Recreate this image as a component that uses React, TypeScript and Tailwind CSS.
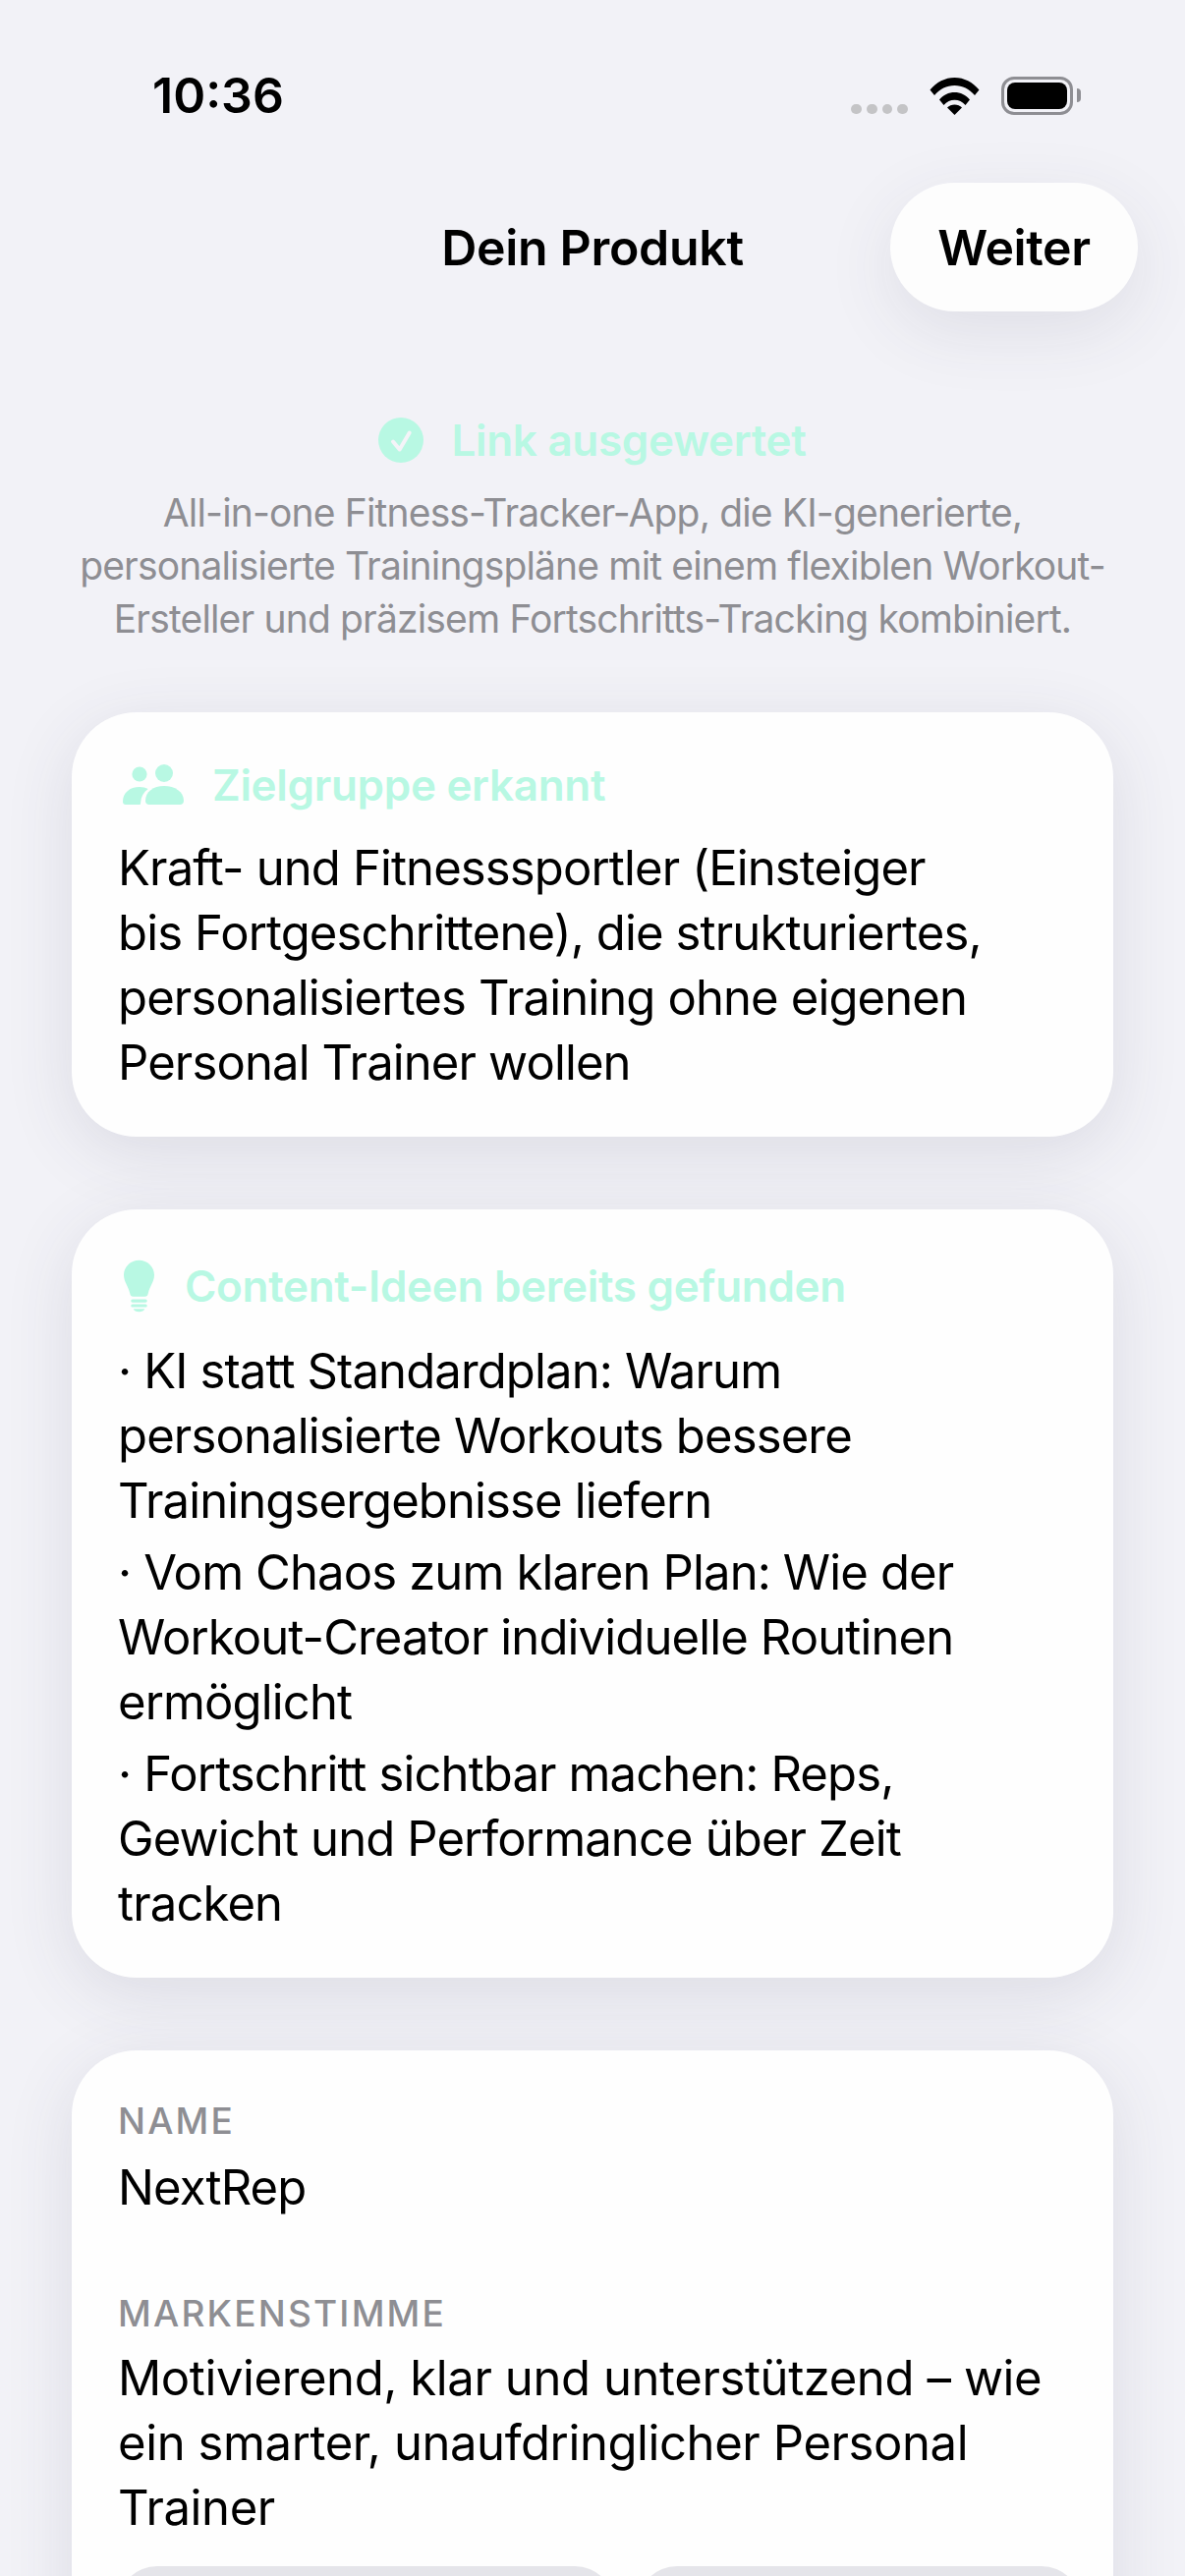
import React from 'react';

const font = "font-['Inter','Noto_Sans',sans-serif]";

function CheckIcon() {
  return (
    <svg viewBox="0 0 46 46" className="w-[46px] h-[46px] shrink-0">
      <circle cx="23" cy="23" r="23" fill="#b8f8e3" />
      <path d="M15 24.500l6.700 8L31.700 15.500" fill="none" stroke="#f4f4f8" strokeWidth="4" strokeLinecap="round" strokeLinejoin="round" />
    </svg>
  );
}

function PeopleIcon() {
  return (
    <svg viewBox="0 0 62 42" className="ml-[5px] w-[62px] h-[42px] shrink-0" fill="#b8f8e3">
      <circle cx="17" cy="10" r="7.6" />
      <circle cx="42" cy="9" r="9" />
      <path d="M0 38c0-9 7-15 17-15 3.500 0 6.400.8 8.700 2-4.600 3.500-7.200 8-7.500 13.500 0 1-.2 2-.7 2.500H3c-2 0-3-1.200-3-3z" />
      <path d="M23 37c0-9 8-15 19-15s20 6 20 15c0 2.500-1.500 4-4 4H27c-2.500 0-4-1.500-4-4z" />
    </svg>
  );
}

function BulbIcon() {
  return (
    <svg viewBox="0 0 32 54" className="ml-[6px] w-[31px] h-[54px] shrink-0" fill="#b8f8e3">
      <path d="M16 0C7 0 0 7 0 15.500c0 7.500 4.500 11 6.500 19.500.5 2 1.300 3 3.300 3h12.400c2 0 2.800-1 3.300-3C27.500 26.500 32 23 32 15.500 32 7 25 0 16 0z" />
      <rect x="7.500" y="41" width="17" height="3.200" rx="1.600" />
      <rect x="7.500" y="46" width="17" height="3.200" rx="1.600" />
      <path d="M10 51h12c-.8 2-3 3-6 3s-5.200-1-6-3z" />
    </svg>
  );
}

function WifiIcon() {
  return (
    <svg viewBox="0 0 50 38" className="w-[51px] h-[38px]" fill="#000">
      <path d="M0 12.500C6.500 4.700 15.300 0 25 0s18.500 4.700 25 12.500l-4.500 5.500C40 11.500 33 8 25 8S10 11.500 4.500 18z" />
      <path d="M9.500 22.500C13.500 17.500 19 15 25 15s11.500 2.500 15.500 7.500L36 28c-3-3.500-6.800-5.300-11-5.300S17 24.500 14 28z" />
      <path d="M17.500 30.500C19.500 28.500 22 27.500 25 27.500s5.500 1 7.500 3L25 38z" />
    </svg>
  );
}

function Battery() {
  return (
    <div className="flex items-center gap-[4px]">
      <div className="w-[73px] h-[39px] rounded-[13px] border-[3px] border-[#8e8e93] p-[3px]">
        <div className="w-full h-full rounded-[8px] bg-black" />
      </div>
      <div className="w-[4px] h-[14px] rounded-r-[4px] bg-[#8e8e93]" />
    </div>
  );
}

function Card({ children }: { children: React.ReactNode }) {
  return (
    <div className="bg-[#fefefe] rounded-[66px] px-[47px] pt-[47px] pb-[42px] shadow-[0_16px_70px_rgba(60,60,90,0.12)]">
      {children}
    </div>
  );
}

const ideas = [
  'KI statt Standardplan: Warum personalisierte Workouts bessere Trainingsergebnisse liefern',
  'Vom Chaos zum klaren Plan: Wie der Workout-Creator individuelle Routinen ermöglicht',
  'Fortschritt sichtbar machen: Reps, Gewicht und Performance über Zeit tracken',
];

const body = 'text-[49px] leading-[66px] tracking-[-0.87px]';
const heading = 'text-[44px] font-semibold tracking-[-0.3px] text-[#b8f8e3]';
const label = 'text-[37px] leading-[50px] font-medium tracking-[2.2px] text-[#8e8e93]';

export default function App() {
  return (
    <div className={`h-[2622px] overflow-hidden bg-[#f2f2f7] text-black ${font}`}>
      {/* Statusleiste */}
      <div className="h-[186px] pl-[155px] pr-[106px] pt-[8px] flex items-center justify-between">
        <span className="text-[50px] font-semibold leading-none">10:36</span>
        <div className="flex items-end gap-[22px]">
          <div className="flex gap-[5px] pb-[1px]">
            <div className="w-[10.7px] h-[10px] rounded-full bg-[#c4c4c6]" />
            <div className="w-[10.7px] h-[10px] rounded-full bg-[#c4c4c6]" />
            <div className="w-[10.7px] h-[10px] rounded-full bg-[#c4c4c6]" />
            <div className="w-[10.7px] h-[10px] rounded-full bg-[#c4c4c6]" />
          </div>
          <WifiIcon />
          <Battery />
        </div>
      </div>

      {/* Navigation */}
      <div className="grid grid-cols-[1fr_auto_1fr] items-center px-[48px]">
        <div />
        <h1 className="text-[50px] font-semibold leading-none tracking-[-0.3px]">Dein Produkt</h1>
        <button className="justify-self-end w-[252px] h-[131px] rounded-full bg-[#fdfdfd] text-[50px] font-semibold leading-none tracking-[-0.4px] shadow-[0_20px_70px_rgba(60,60,90,0.1)]">
          Weiter
        </button>
      </div>

      {/* Auswertung */}
      <div className="mt-[104px] px-[73px]">
        <div className="flex items-center justify-center gap-[28px] h-[54px]">
          <CheckIcon />
          <span className={heading}>Link ausgewertet</span>
        </div>
        <p className="mt-[20px] text-center text-[39px] leading-[54px] tracking-[-0.84px] text-[#8e8e93]">
          All-in-one Fitness-Tracker-App, die KI-generierte, personalisierte Trainingspläne mit einem flexiblen Workout-Ersteller und präzisem Fortschritts-Tracking kombiniert.
        </p>
      </div>

      <div className="mt-[68px] px-[73px] flex flex-col gap-[74px]">
        <Card>
          <div className="flex items-center gap-[29px] h-[54px] mb-[25px]">
            <PeopleIcon />
            <span className={heading}>Zielgruppe erkannt</span>
          </div>
          <p className={body}>
            Kraft- und Fitnesssportler (Einsteiger
            <br />
            bis Fortgeschrittene), die strukturiertes, personalisiertes Training ohne eigenen Personal Trainer wollen
          </p>
        </Card>

        <Card>
          <div className="flex items-center gap-[31px] h-[62px] mb-[23px]">
            <BulbIcon />
            <span className={heading}>Content-Ideen bereits gefunden</span>
          </div>
          <div className="flex flex-col gap-[7px]">
            {ideas.map((idea) => (
              <p key={idea} className={body}>· {idea}</p>
            ))}
          </div>
        </Card>

        <Card>
          <div className={label}>NAME</div>
          <p className={`mt-[10px] ${body}`}>NextRep</p>
          <div className={`mt-[70px] ${label}`}>MARKENSTIMME</div>
          <p className="mt-[8px] text-[49px] leading-[66px] tracking-[-0.4px]">
            Motivierend, klar und unterstützend – wie ein smarter, unaufdringlicher Personal Trainer
          </p>
          <div className="mt-[26px] flex gap-[24px]">
            <div className="w-[505px] h-[90px] shrink-0 rounded-[40px] bg-[#e5e5ea]" />
            <div className="w-[451px] h-[90px] shrink-0 rounded-[40px] bg-[#e5e5ea]" />
          </div>
        </Card>
      </div>
    </div>
  );
}
